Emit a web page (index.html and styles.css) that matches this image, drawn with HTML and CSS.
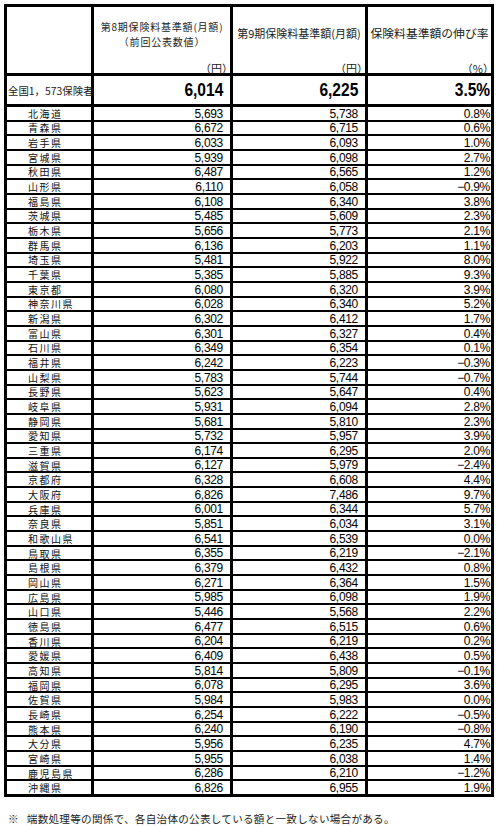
FILE: index.html
```html
<!DOCTYPE html>
<html lang="ja">
<head>
<meta charset="utf-8">
<title>保険料基準額</title>
<link rel="stylesheet" href="styles.css">
</head>
<body>
<div class="sheet">
  <div class="c hd"></div>
  <div class="c hd hd-col">
    <div class="hd-title hd-two"><span>第8期保険料基準額(月額)</span><span>（前回公表数値）</span></div>
    <div class="unit">（円）</div>
  </div>
  <div class="c hd hd-col">
    <div class="hd-title hd-one">第9期保険料基準額(月額)</div>
    <div class="unit">（円）</div>
  </div>
  <div class="c hd hd-col">
    <div class="hd-title hd-one hd-big">保険料基準額の伸び率</div>
    <div class="unit">（%）</div>
  </div>

  <div class="c nat nat-label">全国1，573保険者</div>
  <div class="c nat nat-num"><span class="big">6,014</span></div>
  <div class="c nat nat-num"><span class="big">6,225</span></div>
  <div class="c nat nat-num nat-pct"><span class="big">3.5%</span></div>

  <div class="c pref">北海道</div><div class="c num">5,693</div><div class="c num">5,738</div><div class="c pct">0.8%</div>
  <div class="c pref">青森県</div><div class="c num">6,672</div><div class="c num">6,715</div><div class="c pct">0.6%</div>
  <div class="c pref">岩手県</div><div class="c num">6,033</div><div class="c num">6,093</div><div class="c pct">1.0%</div>
  <div class="c pref">宮城県</div><div class="c num">5,939</div><div class="c num">6,098</div><div class="c pct">2.7%</div>
  <div class="c pref">秋田県</div><div class="c num">6,487</div><div class="c num">6,565</div><div class="c pct">1.2%</div>
  <div class="c pref">山形県</div><div class="c num">6,110</div><div class="c num">6,058</div><div class="c pct">−0.9%</div>
  <div class="c pref">福島県</div><div class="c num">6,108</div><div class="c num">6,340</div><div class="c pct">3.8%</div>
  <div class="c pref">茨城県</div><div class="c num">5,485</div><div class="c num">5,609</div><div class="c pct">2.3%</div>
  <div class="c pref">栃木県</div><div class="c num">5,656</div><div class="c num">5,773</div><div class="c pct">2.1%</div>
  <div class="c pref">群馬県</div><div class="c num">6,136</div><div class="c num">6,203</div><div class="c pct">1.1%</div>
  <div class="c pref">埼玉県</div><div class="c num">5,481</div><div class="c num">5,922</div><div class="c pct">8.0%</div>
  <div class="c pref">千葉県</div><div class="c num">5,385</div><div class="c num">5,885</div><div class="c pct">9.3%</div>
  <div class="c pref">東京都</div><div class="c num">6,080</div><div class="c num">6,320</div><div class="c pct">3.9%</div>
  <div class="c pref">神奈川県</div><div class="c num">6,028</div><div class="c num">6,340</div><div class="c pct">5.2%</div>
  <div class="c pref">新潟県</div><div class="c num">6,302</div><div class="c num">6,412</div><div class="c pct">1.7%</div>
  <div class="c pref">富山県</div><div class="c num">6,301</div><div class="c num">6,327</div><div class="c pct">0.4%</div>
  <div class="c pref">石川県</div><div class="c num">6,349</div><div class="c num">6,354</div><div class="c pct">0.1%</div>
  <div class="c pref">福井県</div><div class="c num">6,242</div><div class="c num">6,223</div><div class="c pct">−0.3%</div>
  <div class="c pref">山梨県</div><div class="c num">5,783</div><div class="c num">5,744</div><div class="c pct">−0.7%</div>
  <div class="c pref">長野県</div><div class="c num">5,623</div><div class="c num">5,647</div><div class="c pct">0.4%</div>
  <div class="c pref">岐阜県</div><div class="c num">5,931</div><div class="c num">6,094</div><div class="c pct">2.8%</div>
  <div class="c pref">静岡県</div><div class="c num">5,681</div><div class="c num">5,810</div><div class="c pct">2.3%</div>
  <div class="c pref">愛知県</div><div class="c num">5,732</div><div class="c num">5,957</div><div class="c pct">3.9%</div>
  <div class="c pref">三重県</div><div class="c num">6,174</div><div class="c num">6,295</div><div class="c pct">2.0%</div>
  <div class="c pref">滋賀県</div><div class="c num">6,127</div><div class="c num">5,979</div><div class="c pct">−2.4%</div>
  <div class="c pref">京都府</div><div class="c num">6,328</div><div class="c num">6,608</div><div class="c pct">4.4%</div>
  <div class="c pref">大阪府</div><div class="c num">6,826</div><div class="c num">7,486</div><div class="c pct">9.7%</div>
  <div class="c pref">兵庫県</div><div class="c num">6,001</div><div class="c num">6,344</div><div class="c pct">5.7%</div>
  <div class="c pref">奈良県</div><div class="c num">5,851</div><div class="c num">6,034</div><div class="c pct">3.1%</div>
  <div class="c pref">和歌山県</div><div class="c num">6,541</div><div class="c num">6,539</div><div class="c pct">0.0%</div>
  <div class="c pref">鳥取県</div><div class="c num">6,355</div><div class="c num">6,219</div><div class="c pct">−2.1%</div>
  <div class="c pref">島根県</div><div class="c num">6,379</div><div class="c num">6,432</div><div class="c pct">0.8%</div>
  <div class="c pref">岡山県</div><div class="c num">6,271</div><div class="c num">6,364</div><div class="c pct">1.5%</div>
  <div class="c pref">広島県</div><div class="c num">5,985</div><div class="c num">6,098</div><div class="c pct">1.9%</div>
  <div class="c pref">山口県</div><div class="c num">5,446</div><div class="c num">5,568</div><div class="c pct">2.2%</div>
  <div class="c pref">徳島県</div><div class="c num">6,477</div><div class="c num">6,515</div><div class="c pct">0.6%</div>
  <div class="c pref">香川県</div><div class="c num">6,204</div><div class="c num">6,219</div><div class="c pct">0.2%</div>
  <div class="c pref">愛媛県</div><div class="c num">6,409</div><div class="c num">6,438</div><div class="c pct">0.5%</div>
  <div class="c pref">高知県</div><div class="c num">5,814</div><div class="c num">5,809</div><div class="c pct">−0.1%</div>
  <div class="c pref">福岡県</div><div class="c num">6,078</div><div class="c num">6,295</div><div class="c pct">3.6%</div>
  <div class="c pref">佐賀県</div><div class="c num">5,984</div><div class="c num">5,983</div><div class="c pct">0.0%</div>
  <div class="c pref">長崎県</div><div class="c num">6,254</div><div class="c num">6,222</div><div class="c pct">−0.5%</div>
  <div class="c pref">熊本県</div><div class="c num">6,240</div><div class="c num">6,190</div><div class="c pct">−0.8%</div>
  <div class="c pref">大分県</div><div class="c num">5,956</div><div class="c num">6,235</div><div class="c pct">4.7%</div>
  <div class="c pref">宮崎県</div><div class="c num">5,955</div><div class="c num">6,038</div><div class="c pct">1.4%</div>
  <div class="c pref">鹿児島県</div><div class="c num">6,286</div><div class="c num">6,210</div><div class="c pct">−1.2%</div>
  <div class="c pref">沖縄県</div><div class="c num">6,826</div><div class="c num">6,955</div><div class="c pct">1.9%</div>
</div>
<p class="note"><span class="mark">※</span>端数処理等の関係で、各自治体の公表している額と一致しない場合がある。</p>
</body>
</html>
```

FILE: styles.css
```css
html, body {
  margin: 0;
  padding: 0;
  background: #fff;
}
body {
  padding: 4px 0 0 4px;
  color: #000;
  font-family: "Noto Sans CJK JP", "Liberation Sans", sans-serif;
}
.sheet {
  width: 484px;
  height: 787px;
  border: 3px solid #000;
  background: #000;
  display: grid;
  grid-template-columns: 84px 136px 132px 123px;
  grid-template-rows: 67px 29px repeat(47, 1fr);
  column-gap: 3px;
  row-gap: 2px;
}
.c {
  background: #fff;
  min-height: 0;
  overflow: visible;
}
.hd, .nat {
  margin-bottom: 1px;
}
.hd-col {
  display: flex;
  flex-direction: column;
  justify-content: space-between;
  font-size: 11px;
  color: #222;
}
.hd-title {
  display: flex;
  flex-direction: column;
  align-items: center;
  white-space: nowrap;
}
.hd-two {
  padding-top: 13px;
  font-size: 10px;
  line-height: 14.5px;
  letter-spacing: 0.8px;
}
.hd-one {
  padding-top: 18px;
  line-height: 16px;
}
.hd-big {
  font-size: 11.8px;
}
.unit {
  text-align: right;
  line-height: 10px;
  font-size: 11px;
  margin-right: -3px;
}
.nat {
  display: flex;
  align-items: center;
}
.nat-label {
  font-size: 10.4px;
  padding-left: 1px;
  white-space: nowrap;
  color: #222;
}
.nat-num {
  justify-content: flex-end;
  font-family: "Liberation Sans", sans-serif;
  font-weight: bold;
  font-size: 18.5px;
  padding-right: 7px;
}
.big {
  display: inline-block;
  transform: scaleX(0.84);
  transform-origin: right center;
}
.nat-pct {
  padding-right: 1px;
}
.pref, .num, .pct {
  display: flex;
  white-space: nowrap;
}
.pref {
  align-items: center;
  font-size: 10px;
  line-height: 12px;
  letter-spacing: 1.5px;
  padding-left: 21px;
  padding-top: 1px;
  color: #111;
}
.num, .pct {
  align-items: flex-end;
  line-height: 11px;
  justify-content: flex-end;
  font-family: "Liberation Sans", sans-serif;
  font-size: 12px;
  letter-spacing: -0.3px;
}
.num {
  padding-right: 7px;
}
.pct {
  padding-right: 1px;
}
.note {
  margin: 15px 0 0 4px;
  font-size: 10.6px;
  line-height: 14px;
  letter-spacing: 0.25px;
  white-space: nowrap;
  color: #222;
}
.mark {
  margin-right: 8px;
}
```
